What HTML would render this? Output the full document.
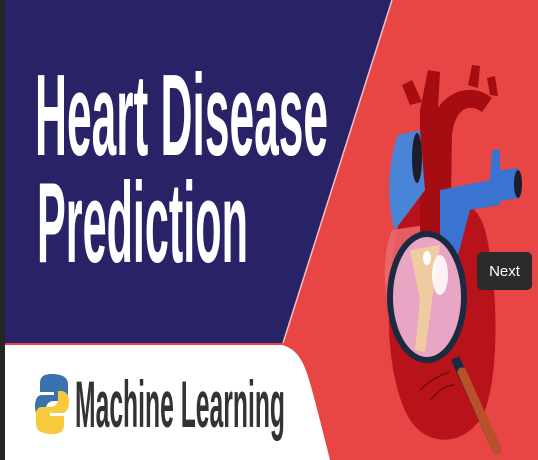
<!DOCTYPE html>
<html><head><style>
html,body{margin:0;padding:0;width:538px;height:460px;overflow:hidden;background:#e84545}
svg{display:block}
.btn{position:absolute;left:477px;top:252px;width:55px;height:38px;background:#2b2b2b;border-radius:5px;color:#fff;font:15px "Liberation Sans",sans-serif;display:flex;align-items:center;justify-content:center}
</style></head><body>
<svg width="538" height="460" viewBox="0 0 538 460">
<rect width="538" height="460" fill="#e84545"/>
<polygon points="0,0 392,0 283,343 0,343" fill="#282266"/>
<line x1="392" y1="0" x2="283" y2="343" stroke="#f3c0c8" stroke-width="1.5"/>
<path d="M0,345 L282,345 C300,350 305,365 312,390 C320,420 325,440 330,460 L0,460 Z" fill="#fff"/>
<rect x="0" y="0" width="5" height="460" fill="#262626"/>
<text x="35" y="155" font-family="Liberation Sans" font-weight="bold" font-size="116" fill="#fff" textLength="293" lengthAdjust="spacingAndGlyphs">Heart Disease</text>
<text x="37" y="262" font-family="Liberation Sans" font-weight="bold" font-size="114" fill="#fff" textLength="211" lengthAdjust="spacingAndGlyphs">Prediction</text>
<text x="75" y="427" font-family="Liberation Sans" font-weight="bold" font-size="66" fill="#333" textLength="210" lengthAdjust="spacingAndGlyphs">Machine Learning</text>
<path d="M52,374 C42,374 40,378 40,384 L40,392 L54,392 L54,395 L42,395 C36,395 35,402 35,407 C35,413 38,417 43,417 L46,417 L46,409 C46,404 49,401 54,401 L62,401 C66,401 68,398 68,394 L68,384 C68,378 63,374 52,374 Z" fill="#3a72ad"/>
<path d="M52,434 C62,434 64,430 64,424 L64,416 L50,416 L50,413 L62,413 C68,413 69,406 69,401 C69,395 66,391 61,391 L58,391 L58,399 C58,404 55,407 50,407 L42,407 C38,407 36,410 36,414 L36,424 C36,430 41,434 52,434 Z" fill="#f7c93c"/>
<!-- heart -->
<path d="M405,200 C385,260 380,370 410,420 C430,450 470,445 485,410 C500,370 498,280 485,230 C475,195 440,185 405,200 Z" fill="#b8131a"/>
<path d="M392,230 C380,260 383,310 400,330 L425,300 L425,225 Z" fill="#ec6b6e" opacity="0.85"/>
<path d="M420,110 L428,70 L440,72 L438,108 C448,92 472,82 492,98 L482,112 C468,102 455,110 452,135 L450,250 L420,250 Z" fill="#a50d12"/>
<path d="M410,105 L402,85 L412,80 L422,102 Z" fill="#a50d12"/>
<path d="M468,85 L472,65 L480,66 L478,88 Z" fill="#a50d12"/>
<path d="M490,95 L487,78 L495,76 L498,96 Z" fill="#a50d12"/>
<path d="M398,135 L420,130 L425,190 L395,230 C386,205 388,160 398,135 Z" fill="#4a84d6"/>
<ellipse cx="417" cy="158" rx="5" ry="25" fill="#1c1c2e"/>
<path d="M440,190 L490,180 L492,150 L500,150 L500,205 L470,210 L458,255 L440,245 Z" fill="#3b74d0"/>
<path d="M490,172 L518,168 L520,198 L495,202 Z" fill="#3b74d0"/>
<ellipse cx="518" cy="184" rx="4" ry="14" fill="#1c1c2e"/>
<path d="M420,390 C430,380 440,375 450,372 M430,400 C440,390 445,385 455,385" stroke="#7a0a0e" stroke-width="1.5" fill="none"/>
<line x1="455" y1="358" x2="497" y2="450" stroke="#1b2a40" stroke-width="9"/>
<line x1="462" y1="372" x2="497" y2="450" stroke="#b8522a" stroke-width="9" stroke-linecap="round"/>
<ellipse cx="427" cy="297" rx="37" ry="63" fill="#e9a6c4" stroke="#1b2a40" stroke-width="6"/>
<path d="M410,250 L420,300 L415,350 L425,352 L432,300 L440,245 Z" fill="#f1d49a" opacity="0.8"/>
<ellipse cx="440" cy="275" rx="8" ry="20" fill="#fff" opacity="0.85"/>
<ellipse cx="427" cy="258" rx="4" ry="7" fill="#fff"/>
</svg>
<div class="btn">Next</div>
</body></html>
